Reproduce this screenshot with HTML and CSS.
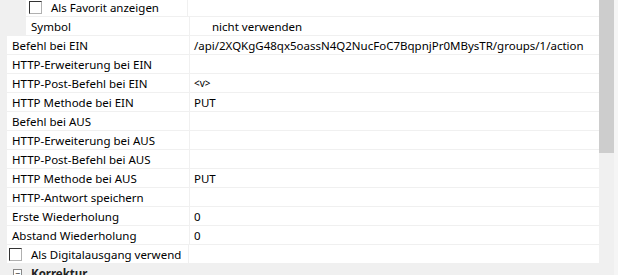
FILE: index.html
```html
<!DOCTYPE html>
<html lang="de">
<head>
  <meta charset="UTF-8" />
  <title>Eigenschaften</title>
  <link rel="stylesheet" href="styles.css">
</head>
<body>
  <div class="frame">
    <div class="grid">
      <div class="row sub">
        <div class="gutter wide"></div>
        <div class="label check"><span class="box"></span>Als Favorit anzeigen</div>
        <div class="value"></div>
      </div>
      <div class="row sub">
        <div class="gutter wide"></div>
        <div class="label">Symbol</div>
        <div class="value symbol">nicht verwenden</div>
      </div>
      <div class="row"><div class="gutter"></div><div class="label">Befehl bei EIN</div><div class="value">/api/2XQKgG48qx5oassN4Q2NucFoC7BqpnjPr0MBysTR/groups/1/action</div></div>
      <div class="row"><div class="gutter"></div><div class="label">HTTP-Erweiterung bei EIN</div><div class="value"></div></div>
      <div class="row"><div class="gutter"></div><div class="label">HTTP-Post-Befehl bei EIN</div><div class="value small">&lt;v&gt;</div></div>
      <div class="row"><div class="gutter"></div><div class="label">HTTP Methode bei EIN</div><div class="value">PUT</div></div>
      <div class="row"><div class="gutter"></div><div class="label">Befehl bei AUS</div><div class="value"></div></div>
      <div class="row"><div class="gutter"></div><div class="label">HTTP-Erweiterung bei AUS</div><div class="value"></div></div>
      <div class="row"><div class="gutter"></div><div class="label">HTTP-Post-Befehl bei AUS</div><div class="value"></div></div>
      <div class="row"><div class="gutter"></div><div class="label">HTTP Methode bei AUS</div><div class="value">PUT</div></div>
      <div class="row"><div class="gutter"></div><div class="label">HTTP-Antwort speichern</div><div class="value"></div></div>
      <div class="row"><div class="gutter"></div><div class="label">Erste Wiederholung</div><div class="value">0</div></div>
      <div class="row"><div class="gutter"></div><div class="label">Abstand Wiederholung</div><div class="value">0</div></div>
      <div class="row">
        <div class="gutter"></div>
        <div class="label check flush"><span class="box"></span>Als Digitalausgang verwend</div>
        <div class="value"></div>
      </div>
      <div class="category"><span class="toggle">−</span>Korrektur</div>
    </div>
    <div class="scrollbar"><div class="thumb"></div></div>
  </div>
</body>
</html>
```

FILE: styles.css
```css
body {
  margin: 0;
  background: #f5f5f5;
  font-family: 'Noto Sans', 'Open Sans', sans-serif;
  font-size: 11.5px;
  color: #000;
  overflow: hidden;
}
.frame {
  display: flex;
  height: 275px;
}
.grid {
  width: 599px;
  background: #f0f0f0;
  margin-top: -2px;
}
.row {
  display: flex;
  height: 18px;
  border-bottom: 1px solid #f0f0f0;
}
.gutter {
  width: 7px;
  flex: none;
  background: #f0f0f0;
}
.gutter.wide {
  width: 26px;
}
.label {
  display: flex;
  align-items: center;
  width: 177px;
  padding-left: 5px;
  background: #fff;
  border-right: 1px solid #f0f0f0;
  white-space: nowrap;
  overflow: hidden;
}
.row.sub .label {
  width: 158px;
}
.value {
  flex: 1;
  display: flex;
  align-items: center;
  padding-left: 4px;
  background: #fff;
  white-space: nowrap;
  overflow: hidden;
}
.value.symbol {
  padding-left: 22px;
}
.value.small {
  font-size: 10px;
}
.check {
  padding-left: 3px;
}
.check.flush {
  width: 179px;
  padding-left: 2px;
}
.box {
  width: 11px;
  height: 11px;
  margin-right: 9px;
  border: 1px solid;
  border-color: #333 #b0b0b0 #b0b0b0 #333;
  background: #fff;
  flex: none;
}
.category {
  display: flex;
  align-items: center;
  height: 18px;
  background: #f0f0f0;
  font-weight: bold;
  color: #222;
}
.toggle {
  display: inline-flex;
  align-items: center;
  justify-content: center;
  width: 7px;
  height: 7px;
  margin: 0 9px 0 13px;
  border: 1px solid #888;
  background: #fff;
  font-size: 9px;
  line-height: 1;
  font-weight: normal;
}
.scrollbar {
  width: 15px;
  background: #f0f0f0;
}
.thumb {
  height: 153px;
  background: #cdcdcd;
}
```
